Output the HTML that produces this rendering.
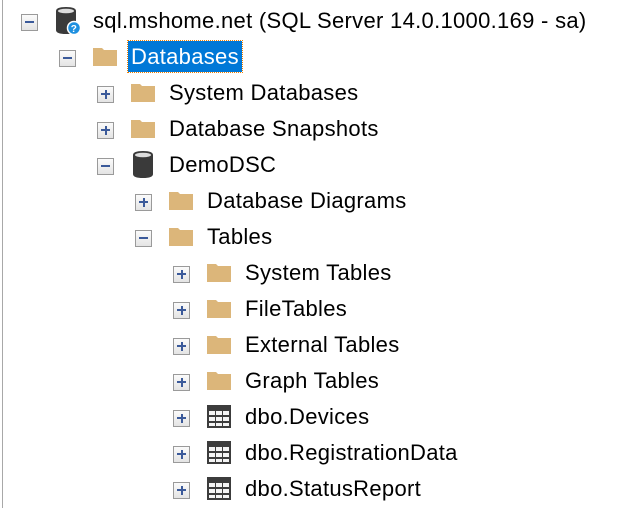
<!DOCTYPE html>
<html><head><style>
body{margin:0;width:630px;height:508px;background:#fff;position:relative;overflow:hidden;font-family:"Liberation Sans",sans-serif;font-size:22px;letter-spacing:0.3px;color:#000}
.vl{position:absolute;left:2px;top:0;width:1px;height:508px;background:#a8a8a8}
.row{position:absolute;height:36px}
.ex{position:absolute;top:12px;width:15px;height:15px;border:1px solid #9a9a9a;background:linear-gradient(#fbfbfb,#e4e4e4)}
.ex:before{content:"";position:absolute;left:3px;top:6px;width:9px;height:2px;background:#3b5a9a}
.ex.p:after{content:"";position:absolute;left:6.5px;top:3px;width:2px;height:9px;background:#3b5a9a}
.ic{position:absolute;top:7px}
.t{position:absolute;top:6px;white-space:nowrap;line-height:26px}
.sel{background:#0078d7;color:#fff;outline:1px dotted #f08000;padding:3px 3px;margin-left:-3px}
</style></head><body>
<div class="vl"></div>
<div class="row" style="left:0;top:2px;width:630px">
 <div class="ex" style="left:21px"></div>
 <svg class="ic" style="left:54px;top:4px" width="28" height="30" viewBox="0 0 28 30"><path d="M2 5 Q2 1 12 1 Q22 1 22 5 V24 Q22 28 12 28 Q2 28 2 24Z" fill="#3a3a3a"/><ellipse cx="12" cy="5" rx="8" ry="2.3" fill="#ddd"/><circle cx="20" cy="22" r="6.5" fill="#1e90e0" stroke="#fff" stroke-width="1.5"/><text x="20" y="26" font-size="10" font-weight="bold" fill="#fff" text-anchor="middle" font-family="Liberation Sans">?</text></svg>
 <div class="t" style="left:93px">sql.mshome.net (SQL Server 14.0.1000.169 - sa)</div>
</div>
<div class="row" style="left:38px;top:38px;width:590px">
 <div class="ex" style="left:21px"></div>
 <svg class="ic" style="left:54px" width="26" height="22"><path d="M1 3h9l2 2h13v16H1z" fill="#dcb67a"/></svg>
 <div class="t" style="left:93px"><span class="sel">Databases</span></div>
</div>
<div class="row" style="left:76px;top:74px"><div class="ex p" style="left:21px"></div><svg class="ic" style="left:54px" width="26" height="22"><path d="M1 3h9l2 2h13v16H1z" fill="#dcb67a"/></svg><div class="t" style="left:93px">System Databases</div></div>
<div class="row" style="left:76px;top:110px"><div class="ex p" style="left:21px"></div><svg class="ic" style="left:54px" width="26" height="22"><path d="M1 3h9l2 2h13v16H1z" fill="#dcb67a"/></svg><div class="t" style="left:93px">Database Snapshots</div></div>
<div class="row" style="left:76px;top:146px"><div class="ex" style="left:21px"></div><svg class="ic" style="left:54px;top:4px" width="26" height="30"><path d="M3 5 Q3 1 13 1 Q23 1 23 5 V24 Q23 28 13 28 Q3 28 3 24Z" fill="#3a3a3a"/><ellipse cx="13" cy="5" rx="8" ry="2.3" fill="#ddd"/></svg><div class="t" style="left:93px">DemoDSC</div></div>
<div class="row" style="left:114px;top:182px"><div class="ex p" style="left:21px"></div><svg class="ic" style="left:54px" width="26" height="22"><path d="M1 3h9l2 2h13v16H1z" fill="#dcb67a"/></svg><div class="t" style="left:93px">Database Diagrams</div></div>
<div class="row" style="left:114px;top:218px"><div class="ex" style="left:21px"></div><svg class="ic" style="left:54px" width="26" height="22"><path d="M1 3h9l2 2h13v16H1z" fill="#dcb67a"/></svg><div class="t" style="left:93px">Tables</div></div>
<div class="row" style="left:152px;top:254px"><div class="ex p" style="left:21px"></div><svg class="ic" style="left:54px" width="26" height="22"><path d="M1 3h9l2 2h13v16H1z" fill="#dcb67a"/></svg><div class="t" style="left:93px">System Tables</div></div>
<div class="row" style="left:152px;top:290px"><div class="ex p" style="left:21px"></div><svg class="ic" style="left:54px" width="26" height="22"><path d="M1 3h9l2 2h13v16H1z" fill="#dcb67a"/></svg><div class="t" style="left:93px">FileTables</div></div>
<div class="row" style="left:152px;top:326px"><div class="ex p" style="left:21px"></div><svg class="ic" style="left:54px" width="26" height="22"><path d="M1 3h9l2 2h13v16H1z" fill="#dcb67a"/></svg><div class="t" style="left:93px">External Tables</div></div>
<div class="row" style="left:152px;top:362px"><div class="ex p" style="left:21px"></div><svg class="ic" style="left:54px" width="26" height="22"><path d="M1 3h9l2 2h13v16H1z" fill="#dcb67a"/></svg><div class="t" style="left:93px">Graph Tables</div></div>
<div class="row" style="left:152px;top:398px"><div class="ex p" style="left:21px"></div><svg class="ic" style="left:54px;top:6px" width="26" height="26"><rect x="1" y="1" width="24" height="23" fill="#3c3c3c"/><g fill="#f4f4f4"><rect x="3" y="7" width="6" height="4"/><rect x="10" y="7" width="6" height="4"/><rect x="17" y="7" width="6" height="4"/><rect x="3" y="13" width="6" height="4"/><rect x="10" y="13" width="6" height="4"/><rect x="17" y="13" width="6" height="4"/><rect x="3" y="19" width="6" height="3"/><rect x="10" y="19" width="6" height="3"/><rect x="17" y="19" width="6" height="3"/></g></svg><div class="t" style="left:93px">dbo.Devices</div></div>
<div class="row" style="left:152px;top:434px"><div class="ex p" style="left:21px"></div><svg class="ic" style="left:54px;top:6px" width="26" height="26"><rect x="1" y="1" width="24" height="23" fill="#3c3c3c"/><g fill="#f4f4f4"><rect x="3" y="7" width="6" height="4"/><rect x="10" y="7" width="6" height="4"/><rect x="17" y="7" width="6" height="4"/><rect x="3" y="13" width="6" height="4"/><rect x="10" y="13" width="6" height="4"/><rect x="17" y="13" width="6" height="4"/><rect x="3" y="19" width="6" height="3"/><rect x="10" y="19" width="6" height="3"/><rect x="17" y="19" width="6" height="3"/></g></svg><div class="t" style="left:93px">dbo.RegistrationData</div></div>
<div class="row" style="left:152px;top:470px"><div class="ex p" style="left:21px"></div><svg class="ic" style="left:54px;top:6px" width="26" height="26"><rect x="1" y="1" width="24" height="23" fill="#3c3c3c"/><g fill="#f4f4f4"><rect x="3" y="7" width="6" height="4"/><rect x="10" y="7" width="6" height="4"/><rect x="17" y="7" width="6" height="4"/><rect x="3" y="13" width="6" height="4"/><rect x="10" y="13" width="6" height="4"/><rect x="17" y="13" width="6" height="4"/><rect x="3" y="19" width="6" height="3"/><rect x="10" y="19" width="6" height="3"/><rect x="17" y="19" width="6" height="3"/></g></svg><div class="t" style="left:93px">dbo.StatusReport</div></div>
</body></html>
